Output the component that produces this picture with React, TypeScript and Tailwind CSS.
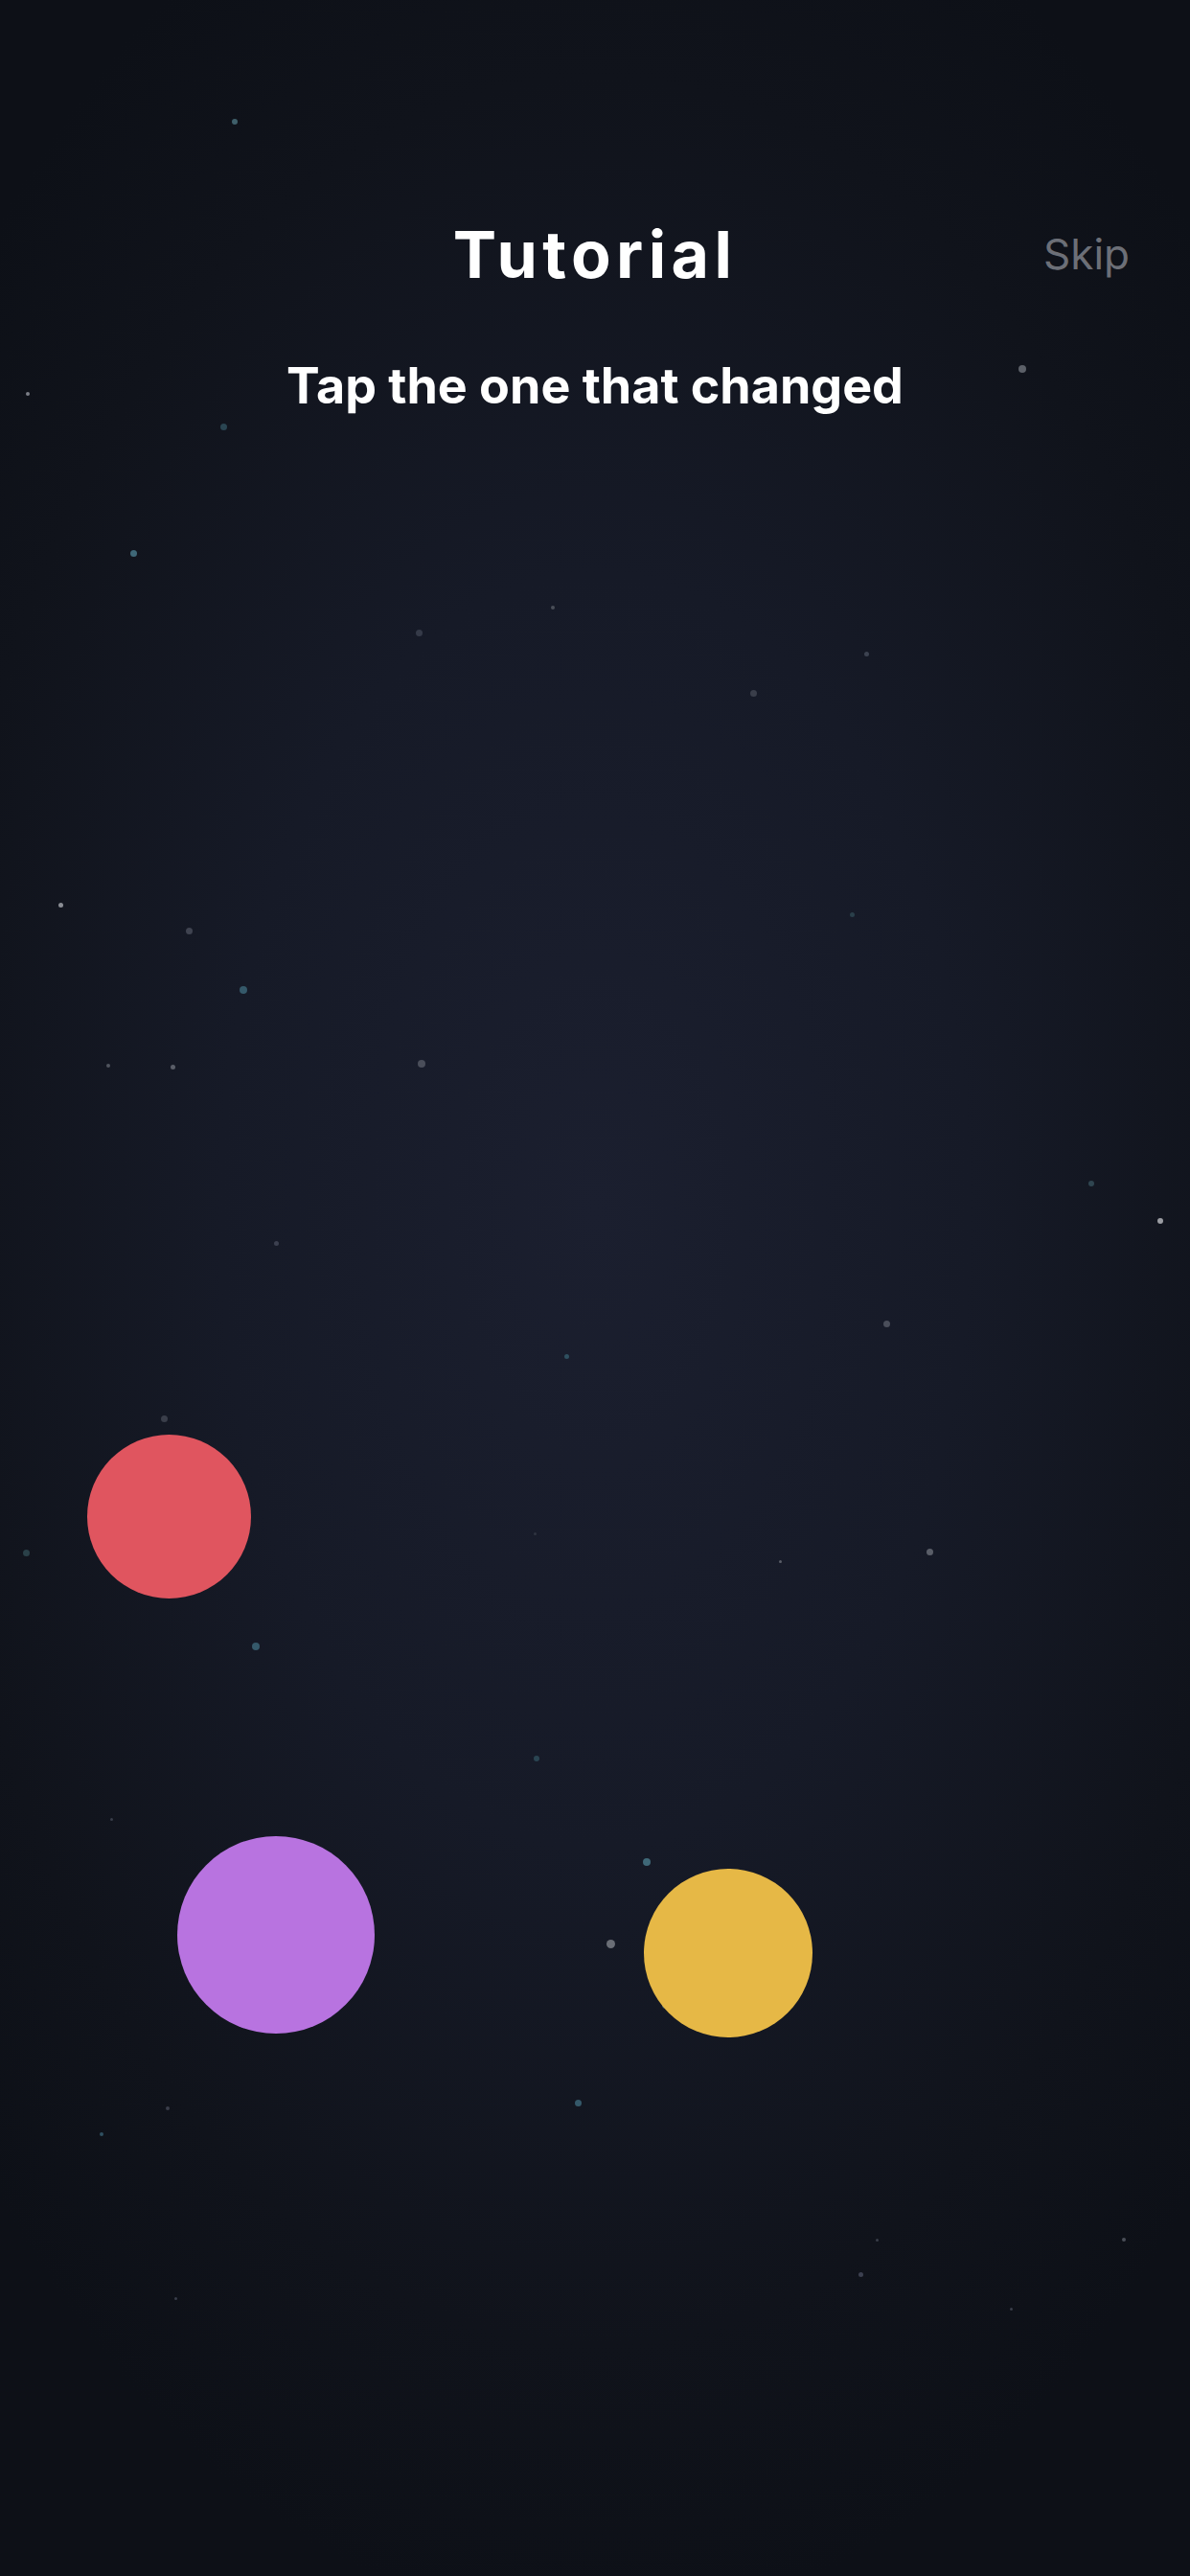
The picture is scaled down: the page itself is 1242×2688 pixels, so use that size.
import React from 'react'

type Star = [number, number, number, string]

const STARS: Star[] = [
  [245, 127, 6, '#3f5f6a'],
  [29, 411, 4, '#7a7e86'],
  [233, 445, 7, '#2a4552'],
  [1067, 385, 8, '#5c6068'],
  [139, 577, 7, '#3f6878'],
  [437, 660, 7, '#353a48'],
  [577, 634, 4, '#4a4e58'],
  [904, 682, 5, '#3c4250'],
  [786, 723, 7, '#3a3e4a'],
  [63, 944, 5, '#8a8d94'],
  [197, 971, 7, '#3f4350'],
  [889, 954, 5, '#2a3f4a'],
  [254, 1033, 8, '#35596a'],
  [113, 1112, 4, '#50545e'],
  [180, 1113, 5, '#5a5e68'],
  [440, 1110, 8, '#4a4e5a'],
  [1139, 1235, 6, '#2f4550'],
  [1211, 1274, 6, '#9a9ca2'],
  [288, 1297, 5, '#3c4050'],
  [925, 1381, 7, '#4a4e5a'],
  [591, 1415, 5, '#2f5060'],
  [171, 1480, 7, '#3a3e4a'],
  [27, 1620, 7, '#2a4048'],
  [558, 1600, 3, '#2f3440'],
  [814, 1629, 3, '#5a5e68'],
  [970, 1619, 7, '#5a5e68'],
  [267, 1718, 8, '#35596a'],
  [560, 1835, 6, '#2a4552'],
  [116, 1898, 3, '#3a3e4a'],
  [675, 1943, 8, '#3f6878'],
  [637, 2028, 9, '#6a6e76'],
  [694, 2092, 7, '#2f5060'],
  [603, 2194, 7, '#35596a'],
  [175, 2200, 4, '#3a3e4a'],
  [106, 2227, 4, '#2f5060'],
  [915, 2337, 3, '#3a3e4a'],
  [1173, 2337, 4, '#4a4e58'],
  [898, 2373, 5, '#3c4050'],
  [183, 2398, 3, '#3a3e4a'],
  [1055, 2409, 3, '#3a3e4a'],
]

interface Orb {
  x: number
  y: number
  d: number
  color: string
}

const ORBS: Orb[] = [
  { x: 176, y: 1582, d: 171, color: '#e0555f' },
  { x: 288, y: 2019, d: 206, color: '#b873e0' },
  { x: 760, y: 2038, d: 176, color: '#e6b846' },
]

export default function App() {
  return (
    <div
      className="relative w-[1242px] h-[2688px] overflow-hidden bg-[#0e1118] bg-[radial-gradient(ellipse_70%_55%_at_50%_47%,#1b1f2f_0%,#161a27_45%,#10131b_80%,#0d1017_100%)]"
      style={{ fontFamily: 'Inter, "Noto Sans", sans-serif' }}
    >
      {/* background specks */}
      {STARS.map(([x, y, s, c], i) => (
        <span
          key={i}
          className="absolute rounded-full"
          style={{ left: x - s / 2, top: y - s / 2, width: s, height: s, backgroundColor: c }}
        />
      ))}

      <div className="relative flex flex-col pt-[231px]">
        <header className="grid grid-cols-[1fr_auto_1fr] items-center">
          <div />
          <h1 className="text-[68px] leading-none font-bold tracking-[0.08em] text-white">Tutorial</h1>
          <button className="justify-self-end pr-[63px] text-[44px] leading-none text-[#6c6f77]">Skip</button>
        </header>
        <p className="mt-[78px] text-center text-[52px] leading-none font-bold text-white">
          Tap the one that changed
        </p>
      </div>

      {/* game field */}
      {ORBS.map((o, i) => (
        <button
          key={i}
          className="absolute rounded-full"
          style={{ left: o.x - o.d / 2, top: o.y - o.d / 2, width: o.d, height: o.d, backgroundColor: o.color }}
        />
      ))}
    </div>
  )
}
